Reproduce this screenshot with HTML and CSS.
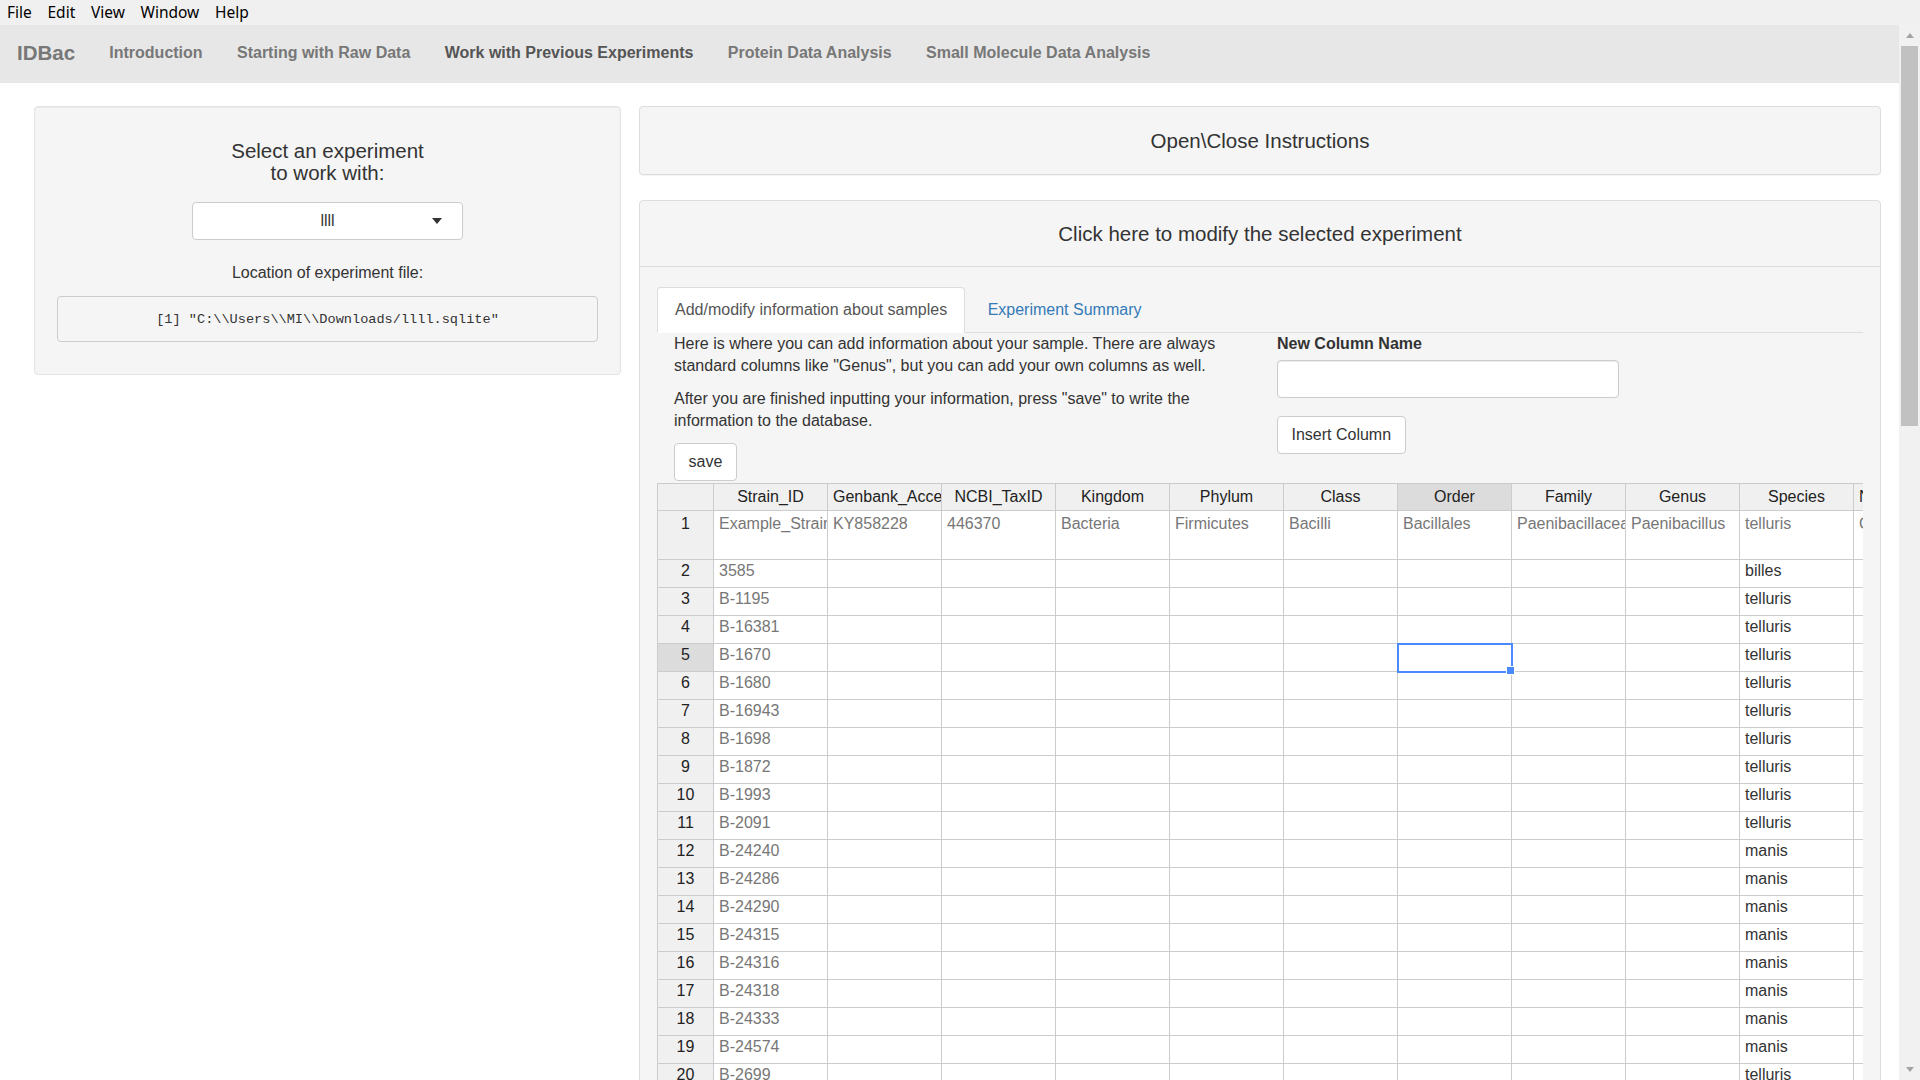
FILE: index.html
```html
<!DOCTYPE html>
<html lang="en">
<head>
<meta charset="utf-8">
<title>IDBac</title>
<link rel="stylesheet" href="styles.css">
</head>
<body>
<div class="menubar">
  <span>File</span><span>Edit</span><span>View</span><span>Window</span><span>Help</span>
</div>
<div class="window">
  <div class="viewport">
    <nav class="navbar">
      <span class="brand">IDBac</span>
      <a class="nav-link">Introduction</a>
      <a class="nav-link">Starting with Raw Data</a>
      <a class="nav-link active">Work with Previous Experiments</a>
      <a class="nav-link">Protein Data Analysis</a>
      <a class="nav-link">Small Molecule Data Analysis</a>
    </nav>
    <div class="container">
      <aside class="well">
        <h4 class="well-title">Select an experiment<br>to work with:</h4>
        <div class="select">
          <span></span>
          <span class="select-value">llll</span>
          <span class="caret"></span>
        </div>
        <p class="loc-label">Location of experiment file:</p>
        <pre class="path">[1] "C:\\Users\\MI\\Downloads/llll.sqlite"</pre>
      </aside>
      <main class="right">
        <div class="panel panel-single">
          <h4 class="panel-heading">Open\Close Instructions</h4>
        </div>
        <div class="panel">
          <h4 class="panel-heading bordered">Click here to modify the selected experiment</h4>
          <div class="panel-body">
            <ul class="tabs">
              <li class="tab active"><a>Add/modify information about samples</a></li>
              <li class="tab"><a class="link">Experiment Summary</a></li>
            </ul>
            <div class="tab-row">
              <div class="col">
                <p class="para">Here is where you can add information about your sample. There are always standard columns like "Genus", but you can add your own columns as well.</p>
                <p class="para">After you are finished inputting your information, press "save" to write the information to the database.</p>
                <button class="btn">save</button>
              </div>
              <div class="col">
                <label class="field-label">New Column Name</label>
                <div class="text-input"></div>
                <button class="btn">Insert Column</button>
              </div>
            </div>
            <div class="grid-wrap">
              <table class="grid">
                <thead>
                  <tr>
                    <th class="c-row"></th>
                    <th class="c-col">Strain_ID</th>
                    <th class="c-col left">Genbank_Accession</th>
                    <th class="c-col">NCBI_TaxID</th>
                    <th class="c-col">Kingdom</th>
                    <th class="c-col">Phylum</th>
                    <th class="c-col">Class</th>
                    <th class="c-col hl">Order</th>
                    <th class="c-col">Family</th>
                    <th class="c-col">Genus</th>
                    <th class="c-col">Species</th>
                    <th class="c-col left">NRRL_Collection_Number</th>
                  </tr>
                </thead>
                <tbody>
                  <tr class="tall">
                    <th>1</th>
                    <td class="dim">Example_Strain</td>
                    <td class="dim">KY858228</td>
                    <td class="dim">446370</td>
                    <td class="dim">Bacteria</td>
                    <td class="dim">Firmicutes</td>
                    <td class="dim">Bacilli</td>
                    <td class="dim">Bacillales</td>
                    <td class="dim">Paenibacillaceae</td>
                    <td class="dim">Paenibacillus</td>
                    <td class="dim">telluris</td>
                    <td class="dim">Collected from soil</td>
                  </tr>
                  <tr><th>2</th><td class="dim">3585</td><td></td><td></td><td></td><td></td><td></td><td></td><td></td><td></td><td>billes</td><td></td></tr>
                  <tr><th>3</th><td class="dim">B-1195</td><td></td><td></td><td></td><td></td><td></td><td></td><td></td><td></td><td>telluris</td><td></td></tr>
                  <tr><th>4</th><td class="dim">B-16381</td><td></td><td></td><td></td><td></td><td></td><td></td><td></td><td></td><td>telluris</td><td></td></tr>
                  <tr><th class="hl">5</th><td class="dim">B-1670</td><td></td><td></td><td></td><td></td><td></td><td class="current"></td><td></td><td></td><td>telluris</td><td></td></tr>
                  <tr><th>6</th><td class="dim">B-1680</td><td></td><td></td><td></td><td></td><td></td><td></td><td></td><td></td><td>telluris</td><td></td></tr>
                  <tr><th>7</th><td class="dim">B-16943</td><td></td><td></td><td></td><td></td><td></td><td></td><td></td><td></td><td>telluris</td><td></td></tr>
                  <tr><th>8</th><td class="dim">B-1698</td><td></td><td></td><td></td><td></td><td></td><td></td><td></td><td></td><td>telluris</td><td></td></tr>
                  <tr><th>9</th><td class="dim">B-1872</td><td></td><td></td><td></td><td></td><td></td><td></td><td></td><td></td><td>telluris</td><td></td></tr>
                  <tr><th>10</th><td class="dim">B-1993</td><td></td><td></td><td></td><td></td><td></td><td></td><td></td><td></td><td>telluris</td><td></td></tr>
                  <tr><th>11</th><td class="dim">B-2091</td><td></td><td></td><td></td><td></td><td></td><td></td><td></td><td></td><td>telluris</td><td></td></tr>
                  <tr><th>12</th><td class="dim">B-24240</td><td></td><td></td><td></td><td></td><td></td><td></td><td></td><td></td><td>manis</td><td></td></tr>
                  <tr><th>13</th><td class="dim">B-24286</td><td></td><td></td><td></td><td></td><td></td><td></td><td></td><td></td><td>manis</td><td></td></tr>
                  <tr><th>14</th><td class="dim">B-24290</td><td></td><td></td><td></td><td></td><td></td><td></td><td></td><td></td><td>manis</td><td></td></tr>
                  <tr><th>15</th><td class="dim">B-24315</td><td></td><td></td><td></td><td></td><td></td><td></td><td></td><td></td><td>manis</td><td></td></tr>
                  <tr><th>16</th><td class="dim">B-24316</td><td></td><td></td><td></td><td></td><td></td><td></td><td></td><td></td><td>manis</td><td></td></tr>
                  <tr><th>17</th><td class="dim">B-24318</td><td></td><td></td><td></td><td></td><td></td><td></td><td></td><td></td><td>manis</td><td></td></tr>
                  <tr><th>18</th><td class="dim">B-24333</td><td></td><td></td><td></td><td></td><td></td><td></td><td></td><td></td><td>manis</td><td></td></tr>
                  <tr><th>19</th><td class="dim">B-24574</td><td></td><td></td><td></td><td></td><td></td><td></td><td></td><td></td><td>manis</td><td></td></tr>
                  <tr><th>20</th><td class="dim">B-2699</td><td></td><td></td><td></td><td></td><td></td><td></td><td></td><td></td><td>telluris</td><td></td></tr>
                  <tr><th>21</th><td class="dim">B-2700</td><td></td><td></td><td></td><td></td><td></td><td></td><td></td><td></td><td>telluris</td><td></td></tr>
                </tbody>
              </table>
            </div>
          </div>
        </div>
      </main>
    </div>
  </div>
  <div class="scrollbar">
    <div class="sb-btn"><span class="arrow-up"></span></div>
    <div class="sb-thumb"></div>
    <div class="sb-track"></div>
    <div class="sb-btn"><span class="arrow-down"></span></div>
  </div>
</div>
</body>
</html>
```

FILE: styles.css
```css
* { box-sizing: border-box; }

html, body {
  margin: 0;
  height: 1080px;
  overflow: hidden;
}

body {
  font-family: "Liberation Sans", Arial, Helvetica, sans-serif;
  font-size: 16px;
  line-height: 22px;
  color: #333;
  background: #fff;
}

/* window menu */
.menubar {
  height: 25px;
  background: #f0f0f0;
  display: flex;
  align-items: center;
  gap: 15.7px;
  padding-left: 7px;
  font-family: "Noto Sans", "Open Sans", sans-serif;
  font-size: 15.5px;
  line-height: 25px;
  color: #000;
}

.window {
  display: flex;
  height: 1055px;
}

.viewport {
  flex: 1;
  min-width: 0;
  overflow: hidden;
}

/* navbar */
.navbar {
  height: 58px;
  background: #e7e7e7;
  display: flex;
  align-items: center;
  padding-bottom: 2px;
}

.brand {
  padding: 0 17px;
  font-size: 20.5px;
  font-weight: bold;
  color: #777;
}

.nav-link {
  padding: 0 17.2px;
  font-size: 16px;
  font-weight: bold;
  color: #777;
}

.nav-link.active { color: #555; }

/* layout */
.container {
  display: grid;
  grid-template-columns: 587px minmax(0, 1fr);
  gap: 18px;
  padding: 23px 18px 0 34px;
  align-items: start;
}

.right { min-width: 0; }

/* left well */
.well {
  background: #f5f5f5;
  border: 1px solid #e3e3e3;
  border-radius: 4px;
  box-shadow: inset 0 1px 1px rgba(0, 0, 0, .05);
  padding: 21px 22px;
  text-align: center;
}

.well-title {
  margin: 12px 0 18px;
  font-size: 20.5px;
  line-height: 22px;
  font-weight: normal;
}

.select {
  width: 271px;
  height: 38px;
  margin: 0 auto;
  background: #fff;
  border: 1px solid #ccc;
  border-radius: 4px;
  display: grid;
  grid-template-columns: 1fr auto 1fr;
  align-items: center;
}

.select-value { color: #333; }

.caret {
  justify-self: end;
  margin-right: 20px;
  width: 0;
  height: 0;
  border-left: 5.5px solid transparent;
  border-right: 5.5px solid transparent;
  border-top: 6px solid #333;
}

.loc-label {
  margin: 22px 0 12px;
}

.path {
  margin: 0 0 11px;
  height: 46px;
  padding: 11px;
  border: 1px solid #ccc;
  border-radius: 4px;
  background: #f5f5f5;
  font-family: "Liberation Mono", "Courier New", monospace;
  font-size: 13.6px;
  line-height: 23px;
  color: #333;
  text-align: center;
  white-space: pre;
}

/* panels */
.panel {
  background: #f5f5f5;
  border: 1px solid #ddd;
  border-radius: 4px;
  box-shadow: 0 1px 1px rgba(0, 0, 0, .05);
}

.panel-single { margin-bottom: 25px; }

.panel-heading {
  margin: 0;
  padding: 22.5px 15px;
  font-size: 20.5px;
  line-height: 22px;
  font-weight: normal;
  text-align: center;
  color: #333;
}

.panel-heading.bordered {
  padding: 21.5px 15px;
  border-bottom: 1px solid #ddd;
}

.panel-body {
  padding: 19.5px 17px 0;
}

/* tabs */
.tabs {
  list-style: none;
  margin: 0;
  padding: 0;
  display: flex;
  border-bottom: 1px solid #ddd;
}

.tab {
  margin-bottom: -1px;
  margin-right: 4.5px;
}

.tab a {
  display: block;
  padding: 11px 17px;
  line-height: 22px;
  border: 1px solid transparent;
  border-radius: 4px 4px 0 0;
  color: #555;
}

.tab.active a {
  background: #fff;
  border-color: #ddd #ddd transparent;
}

.tab a.link { color: #337ab7; }

.tab-row {
  display: flex;
}

.col {
  flex: 1;
  min-width: 0;
  padding: 0 17px;
}

.para { margin: 0 0 11px; }

.btn {
  display: block;
  height: 38px;
  padding: 0 13.5px;
  background: #fff;
  border: 1px solid #ccc;
  border-radius: 4px;
  font-family: inherit;
  font-size: 16px;
  line-height: 22px;
  color: #333;
}

.field-label {
  display: block;
  font-weight: bold;
  margin-bottom: 5.5px;
}

.text-input {
  width: 342px;
  height: 37.5px;
  background: #fff;
  border: 1px solid #ccc;
  border-radius: 4px;
  box-shadow: inset 0 1px 1px rgba(0, 0, 0, .075);
  margin-bottom: 18px;
}

/* grid */
.grid-wrap {
  margin-top: 2px;
  overflow: hidden;
}

.grid {
  border-collapse: separate;
  border-spacing: 0;
  table-layout: fixed;
  width: 1311px;
  font-size: 16px;
}

.grid th,
.grid td {
  box-sizing: border-box;
  height: 28px;
  padding: 0 5px;
  border-right: 1px solid #ccc;
  border-bottom: 1px solid #ccc;
  overflow: hidden;
  white-space: nowrap;
  vertical-align: top;
  line-height: 21px;
  background: #fff;
  color: #333;
  font-weight: normal;
}

.grid .c-row { width: 57px; }
.grid .c-col { width: 114px; }

.grid thead th {
  border-top: 1px solid #ccc;
  background: #f0f0f0;
  color: #222;
  text-align: center;
  vertical-align: middle;
}

.grid thead th.left { text-align: left; }

.grid thead th:first-child,
.grid tbody th {
  border-left: 1px solid #ccc;
}

.grid tbody th {
  background: #f0f0f0;
  color: #222;
  text-align: center;
}

.grid th.hl { background: #dcdcdc; }

.grid tr.tall th,
.grid tr.tall td {
  height: 49px;
  padding-top: 2px;
}

.grid td.dim { color: #777; }

.grid td.current {
  position: relative;
  overflow: visible;
  outline: 2px solid #4b89ff;
  outline-offset: -1px;
}

.grid td.current::after {
  content: "";
  position: absolute;
  right: -4px;
  bottom: -4px;
  width: 7px;
  height: 7px;
  background: #4b89ff;
  border: 1px solid #fff;
}

/* scrollbar */
.scrollbar {
  width: 21px;
  background: #f1f1f1;
  display: flex;
  flex-direction: column;
}

.sb-btn {
  height: 21px;
  display: flex;
  align-items: center;
  justify-content: center;
}

.sb-thumb {
  height: 380px;
  margin: 0 2px;
  background: #c1c1c1;
}

.sb-track { flex: 1; }

.arrow-up,
.arrow-down {
  width: 0;
  height: 0;
  border-left: 4.5px solid transparent;
  border-right: 4.5px solid transparent;
}

.arrow-up { border-bottom: 5px solid #a3a3a3; }
.arrow-down { border-top: 5px solid #a3a3a3; }
```
